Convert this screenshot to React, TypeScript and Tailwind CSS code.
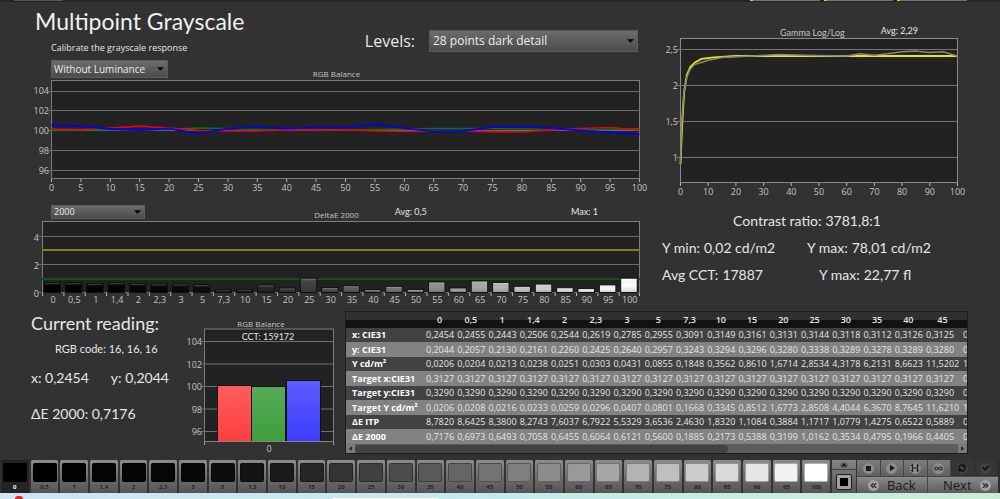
import React from 'react';
import { Check, ChevronsLeft, ChevronsRight, Infinity as InfinityIcon, RefreshCw } from 'lucide-react';

type Point = [number, number];

const levels = [
  '0', '0,5', '1', '1,4', '2', '2,3', '3', '5', '7,3', '10', '15', '20', '25', '30',
  '35', '40', '45', '50', '55', '60', '65', '70', '75', '80', '85', '90', '95', '100'
];

const deltaE = [
  0.72, 0.7, 0.65, 0.71, 0.65, 0.61, 0.61, 0.56, 0.19, 0.22, 0.54, 0.32, 1.02, 0.35,
  0.48, 0.2, 0.44, 0.22, 0.75, 0.32, 0.82, 0.72, 0.44, 0.6, 0.34, 0.28, 0.54, 1.02
];

const rows = [
  { label: 'x: CIE31', values: ['0,2454', '0,2455', '0,2443', '0,2506', '0,2544', '0,2619', '0,2785', '0,2955', '0,3091', '0,3149', '0,3161', '0,3131', '0,3144', '0,3118', '0,3112', '0,3126', '0,3125', '0,3121'] },
  { label: 'y: CIE31', values: ['0,2044', '0,2057', '0,2130', '0,2161', '0,2260', '0,2425', '0,2640', '0,2957', '0,3243', '0,3294', '0,3296', '0,3280', '0,3338', '0,3289', '0,3278', '0,3289', '0,3280', '0,3284'] },
  { label: 'Y cd/m²', values: ['0,0206', '0,0204', '0,0213', '0,0238', '0,0251', '0,0303', '0,0431', '0,0855', '0,1848', '0,3562', '0,8610', '1,6714', '2,8534', '4,3178', '6,2131', '8,6623', '11,5202', '14,8230'] },
  { label: 'Target x:CIE31', values: Array(18).fill('0,3127') },
  { label: 'Target y:CIE31', values: Array(18).fill('0,3290') },
  { label: 'Target Y cd/m²', values: ['0,0206', '0,0208', '0,0216', '0,0233', '0,0259', '0,0296', '0,0407', '0,0801', '0,1668', '0,3345', '0,8512', '1,6773', '2,8508', '4,4044', '6,3670', '8,7645', '11,6210', '14,9110'] },
  { label: 'ΔE ITP', values: ['8,7820', '8,6425', '8,3800', '8,2743', '7,6037', '6,7922', '5,5329', '3,6536', '2,4630', '1,8320', '1,1084', '0,3884', '1,1717', '1,0779', '1,4275', '0,6522', '0,5889', '0,6012'] },
  { label: 'ΔE 2000', values: ['0,7176', '0,6973', '0,6493', '0,7058', '0,6455', '0,6064', '0,6121', '0,5600', '0,1885', '0,2173', '0,5388', '0,3199', '1,0162', '0,3534', '0,4795', '0,1966', '0,4405', '0,2204'] }
];

// One value for every 5 % of signal level
const red = [100.1, 100.05, 100.2, 100.4, 100.2, 99.95, 99.9, 99.9, 100, 100.05, 100, 99.9, 99.85, 99.9, 99.9, 99.83, 99.8, 100, 100.15, 100.25, 100];
const green = [100, 100, 100.05, 100, 100.05, 100.2, 100.15, 100.05, 100.05, 100, 100, 100.05, 100.1, 100.15, 100.15, 100.15, 100.1, 100.1, 100.05, 100.05, 100.15];
const blue = [100.5, 100.4, 100.1, 100, 100.15, 99.65, 100.15, 100.3, 100.15, 100.25, 100.25, 100.57, 100.2, 99.85, 99.9, 100.3, 100.35, 100.2, 99.95, 99.75, 99.55];

const gammaTarget: Point[] = [[0, 0.91], [0.6, 1.45], [1.3, 1.9], [2.3, 2.15], [3.6, 2.26], [5.2, 2.32], [7.6, 2.37], [12, 2.39], [20, 2.41], [100, 2.41]];
const gammaMeasured: Point[] = [[0, 0.91], [0.4, 1.45], [1.2, 1.9], [2.3, 2.12], [3.4, 2.22], [5, 2.29], [7.5, 2.32], [10, 2.35], [15, 2.39], [20, 2.4], [26, 2.41], [35, 2.43], [45, 2.42], [60, 2.41], [65, 2.44], [70, 2.42], [75, 2.44], [80, 2.47], [85, 2.48], [90, 2.46], [95, 2.47], [100, 2.41]];

const toPoints = (points: Point[]) => points.map((p) => p.join(',')).join(' ');

const balancePoints = (values: number[]) =>
  toPoints(values.map((v, i) => [51.5 + i * 29.4, 130 - (v - 100) * 9.8]));

const gammaPoints = (values: Point[]) =>
  toPoints(values.map(([x, y]) => [680.5 + x * 2.765, 229.5 - y * 72]));

const axisText = 'fill-[#c4c4c4] font-["Open_Sans",sans-serif] text-[9px]';

const BalanceChart = () => (
  <svg viewBox="0 78 650 122" className="block w-full" role="img" aria-label="RGB Balance">
    <rect x="51.5" y="80.5" width="588" height="98" fill="#222" stroke="#7c7c7c" />
    {[104, 102, 100, 98, 96].map((v, i) => (
      <g key={v}>
        <line x1="48" x2="640" y1={[91.5, 110.5, 130.5, 150.5, 170.5][i]} y2={[91.5, 110.5, 130.5, 150.5, 170.5][i]} stroke="#6c6c6c" />
        <text x="49" y={94 + i * 20} textAnchor="end" className={axisText}>{v}</text>
      </g>
    ))}
    {red.map((_, i) => (
      <g key={i}>
        <line x1={51.5 + i * 29.4} x2={51.5 + i * 29.4} y1="179" y2="182" stroke="#b4b4b4" />
        <text x={51.5 + i * 29.4} y="191" textAnchor="middle" className={axisText}>{i * 5}</text>
      </g>
    ))}
    <polyline points={balancePoints(green)} fill="none" stroke="#007c00" strokeWidth="1.6" />
    <polyline points={balancePoints(red)} fill="none" stroke="#f00000" strokeWidth="1.6" />
    <polyline points={balancePoints(blue)} fill="none" stroke="#0000f4" strokeWidth="1.8" />
  </svg>
);

const DeltaChart = () => (
  <svg viewBox="0 220 650 86" className="block w-full" role="img" aria-label="DeltaE 2000">
    <defs>
      <linearGradient id="shade" x1="0" y1="0" x2="0" y2="1">
        <stop offset="0" stopColor="#fff" stopOpacity="0.12" />
        <stop offset="0.5" stopColor="#000" stopOpacity="0" />
        <stop offset="1" stopColor="#000" stopOpacity="0.15" />
      </linearGradient>
    </defs>
    <rect x="42.5" y="221.5" width="597" height="71" fill="#222" stroke="#7c7c7c" />
    {[236.5, 264.5, 292.5].map((y, i) => (
      <g key={y}>
        <line x1="38" x2="640" y1={y} y2={y} stroke="#6c6c6c" />
        <text x="39" y={y + 4} textAnchor="end" className={axisText}>{4 - i * 2}</text>
      </g>
    ))}
    <line x1="42" x2="640" y1="250" y2="250" stroke="#857f12" strokeWidth="2" />
    <line x1="42" x2="640" y1="279" y2="279" stroke="#0f5218" strokeWidth="2" />
    {levels.map((level, i) => {
      const x = 44 + i * 21.36;
      const height = deltaE[i] * 14;
      const gray = Math.min(255, Math.round(parseFloat(level.replace(',', '.')) * 2.6));
      return (
        <g key={level}>
          <rect x={x} y={292.5 - height} width="16.5" height={height} fill={`rgb(${gray},${gray},${gray})`} stroke="#101010" />
          <rect x={x + 0.5} y={293 - height} width="15.5" height={height - 1} fill="url(#shade)" />
          <line x1={x + 1} x2={x + 15.5} y1={293.5 - height} y2={293.5 - height} stroke="#fff" strokeOpacity="0.16" />
          <line x1={42.5 + i * 21.36} x2={42.5 + i * 21.36} y1="293" y2="296" stroke="#b4b4b4" />
          <text x={x + 9} y="303" textAnchor="middle" className={axisText}>{level}</text>
        </g>
      );
    })}
    <line x1="639.5" x2="639.5" y1="293" y2="296" stroke="#b4b4b4" />
  </svg>
);

const GammaChart = () => (
  <svg viewBox="650 37 350 163" className="block w-full" role="img" aria-label="Gamma Log/Log">
    <rect x="680.5" y="38.5" width="277" height="144" fill="#222" stroke="#8a8a8a" />
    {['2,5', '2', '1,5', '1'].map((v, i) => (
      <g key={v}>
        <line x1="677" x2="957" y1={49.5 + i * 36} y2={49.5 + i * 36} stroke="#747474" />
        <text x="678" y={53 + i * 36} textAnchor="end" className={axisText}>{v}</text>
      </g>
    ))}
    {[0, 10, 20, 30, 40, 50, 60, 70, 80, 90, 100].map((v) => (
      <g key={v}>
        <line x1={680.5 + v * 2.77} x2={680.5 + v * 2.77} y1="183" y2="186" stroke="#b4b4b4" />
        <text x={680.5 + v * 2.77} y="195" textAnchor="middle" className={axisText}>{v}</text>
      </g>
    ))}
    <polyline points={gammaPoints(gammaTarget)} fill="none" stroke="#e8e800" strokeWidth="1.8" />
    <polyline points={gammaPoints(gammaMeasured)} fill="none" stroke="#858585" strokeWidth="1.5" />
  </svg>
);

const ReadingChart = () => (
  <svg viewBox="185 328 160 129" className="block w-full" role="img" aria-label="RGB Balance of the current reading">
    <defs>
      <linearGradient id="barRed" x1="0" y1="0" x2="0" y2="1">
        <stop offset="0" stopColor="#ff5c5c" />
        <stop offset="1" stopColor="#ff3e3e" />
      </linearGradient>
      <linearGradient id="barGreen" x1="0" y1="0" x2="0" y2="1">
        <stop offset="0" stopColor="#58aa58" />
        <stop offset="1" stopColor="#3c9f3c" />
      </linearGradient>
      <linearGradient id="barBlue" x1="0" y1="0" x2="0" y2="1">
        <stop offset="0" stopColor="#5c5cff" />
        <stop offset="1" stopColor="#3c3cff" />
      </linearGradient>
    </defs>
    <rect x="204.5" y="329" width="129" height="112.5" fill="#222" stroke="#7c7c7c" />
    {[104, 102, 100, 98, 96].map((v, i) => (
      <g key={v}>
        <line x1="201" x2="333" y1={341.5 + i * 22.5} y2={341.5 + i * 22.5} stroke="#707070" />
        <text x="202" y={345 + i * 22.5} textAnchor="end" className={axisText}>{v}</text>
      </g>
    ))}
    <rect x="217.5" y="385.5" width="34" height="56" fill="url(#barRed)" stroke="#111" />
    <rect x="251.5" y="386.5" width="34" height="55" fill="url(#barGreen)" stroke="#111" />
    <rect x="286.5" y="380.5" width="34" height="61" fill="url(#barBlue)" stroke="#111" />
    <line x1="204" x2="334" y1="441.5" y2="441.5" stroke="#858585" />
    <line x1="204.5" x2="204.5" y1="442" y2="445" stroke="#999" />
    <line x1="333.5" x2="333.5" y1="442" y2="445" stroke="#999" />
    <text x="268" y="340" textAnchor="middle" className='fill-[#e4e4e4] font-["Lato",sans-serif] text-[9px]'>CCT: 159172</text>
    <text x="269" y="452" textAnchor="middle" className={axisText}>0</text>
  </svg>
);

type DropdownProps = { label: string; value: string; className: string };

const Dropdown = ({ label, value, className }: DropdownProps) => (
  <div className="relative">
    <select
      aria-label={label}
      className={`block w-full appearance-none border border-[#5c5c5c] bg-linear-to-b from-[#6c6c6c] to-[#4b4b4b] text-[#ececec] ${className}`}
    >
      <option>{value}</option>
    </select>
    <svg viewBox="0 0 8 4" className="pointer-events-none absolute top-1/2 right-1 h-1 w-[7px] -translate-y-1/2">
      <path d="M0 0h8L4 4z" fill="#050505" />
    </svg>
  </div>
);

const toolButtons = [
  { name: 'Stop', icon: <span className="size-[5px] bg-[#181818]" />, off: false },
  { name: 'Play', icon: <svg viewBox="0 0 6 6" className="size-[6px]"><path d="M1 0l5 3-5 3z" fill="#181818" /></svg>, off: false },
  { name: 'Read series', icon: <svg viewBox="0 0 8 8" className="size-2"><path d="M1.5 0v8M6.5 0v8M1.5 4h5M0 1.500h2M6 1.500h2M0 6.500h2M6 6.500h2" stroke="#222" strokeWidth="1.200" /></svg>, off: false },
  { name: 'Read continuously', icon: <InfinityIcon size={9} strokeWidth={3} />, off: false },
  { name: 'Refresh', icon: <RefreshCw size={8} strokeWidth={4} />, off: true },
  { name: 'Apply', icon: <Check size={8} strokeWidth={5} />, off: true }
];

const App: React.FC = () => {
  return (
    <div className='flex min-h-screen flex-col overflow-hidden bg-[#323232] font-["Open_Sans",sans-serif] text-[#e6e6e6]'>
      {/* Lower edge of the charts above */}
      <div className="grid h-[2px] grid-cols-[14fr_49fr_687fr_217fr_33fr] bg-[#242424]">
        <span />
        <span className="h-px bg-[#555]" />
        <span />
        <span className="grid h-px grid-cols-3 gap-1">
          {[0, 1, 2].map((i) => (
            <span key={i} className="border-l-3 border-[#d6d600] bg-[#747474]" />
          ))}
        </span>
      </div>

      <main className="grid grid-cols-[650fr_350fr]">
        <section>
          <div className="flex h-[58px] items-start justify-between pr-3 pl-[35px]">
            <div>
              <h1 className='pt-[3px] font-["Lato",sans-serif] text-[23px] leading-8 text-[#f0f0f0]'>Multipoint Grayscale</h1>
              <p className="pt-px pl-4 text-[9px] leading-5 whitespace-nowrap">Calibrate the grayscale response</p>
            </div>
            <div className="flex items-center gap-[14px] pt-[27px]">
              <span className="text-[16px] leading-6">Levels:</span>
              <div className="w-[209px]">
                <Dropdown label="Levels" value="28 points dark detail" className="h-[22px] px-[3px] text-[12px]" />
              </div>
            </div>
          </div>
          <div className="grid grid-cols-[1fr_auto_1fr] items-end pr-7 pl-[51px]">
            <div className="w-[117px]">
              <Dropdown label="Luminance" value="Without Luminance" className="h-[18px] px-[2px] text-[10px]" />
            </div>
            <h2 className="text-[8px] leading-2 text-[#c4c4c4]">RGB Balance</h2>
          </div>
          <BalanceChart />

          <div className="grid grid-cols-[1fr_auto_1fr] items-end pt-[5px] pr-7 pb-px pl-[51px]">
            <div className="w-[94px]">
              <Dropdown label="DeltaE formula" value="2000" className="h-[14px] px-[2px] text-[9px] leading-3" />
            </div>
            <h2 className="text-[8px] leading-2 text-[#c4c4c4]">DeltaE 2000</h2>
            <div className='flex justify-between pr-6 pb-px pl-9 font-["Lato",sans-serif] text-[9px] leading-3'>
              <span>Avg: 0,5</span>
              <span>Max: 1</span>
            </div>
          </div>
          <DeltaChart />
        </section>

        <section>
          <div className='flex h-[35px] items-end justify-center gap-9 pl-12 font-["Lato",sans-serif] text-[9px] leading-2'>
            <h2 className="text-[#c4c4c4]">Gamma Log/Log</h2>
            <span className="pb-[2px]">Avg: 2,29</span>
          </div>
          <GammaChart />
          <dl className='grid grid-cols-[145fr_193fr] gap-y-[3px] pt-[9px] pl-3 font-["Lato",sans-serif] text-[14px] leading-6'>
            <div className="col-span-2 flex justify-center gap-1 pr-12">
              <dt>Contrast ratio:</dt>
              <dd>3781,8:1</dd>
            </div>
            <div className="flex gap-1">
              <dt>Y min:</dt>
              <dd>0,02 cd/m2</dd>
            </div>
            <div className="flex gap-1">
              <dt>Y max:</dt>
              <dd>78,01 cd/m2</dd>
            </div>
            <div className="flex gap-1">
              <dt>Avg CCT:</dt>
              <dd>17887</dd>
            </div>
            <div className="flex gap-1 pl-3">
              <dt>Y max:</dt>
              <dd>22,77 fl</dd>
            </div>
          </dl>
        </section>
      </main>

      <div className="grid grid-cols-[185fr_160fr_655fr] pt-[5px] pb-[3px]">
        <section className='pl-[31px] font-["Lato",sans-serif] text-[14px] leading-6 whitespace-nowrap'>
          <h2 className="text-[18px] leading-6">Current reading:</h2>
          <p className="py-[2px] pl-6 text-[11px]">RGB code: 16, 16, 16</p>
          <p className="flex gap-[22px] pt-[3px]">
            <span>x: 0,2454</span>
            <span>y: 0,2044</span>
          </p>
          <p className="pt-3">ΔE 2000: 0,7176</p>
        </section>

        <section>
          <h2 className="pt-[9px] pr-2 text-center text-[8px] leading-2 text-[#c4c4c4]">RGB Balance</h2>
          <ReadingChart />
        </section>

        <section className="mr-8 h-[143px] min-w-0 overflow-hidden border border-[#1c1c1c]">
          <table className="w-[646px] table-fixed border-collapse text-[9px] leading-3 whitespace-nowrap">
            <colgroup>
              <col className="w-[78px]" />
              {levels.slice(0, 16).map((level) => (
                <col key={level} />
              ))}
              <col className="w-[37px]" />
              <col className="w-[31px]" />
            </colgroup>
            <thead>
              <tr className="h-4 bg-linear-to-b from-[#303030] from-50% to-[#121212] to-50%">
                <th className="p-0" aria-label="Measure" />
                {levels.slice(0, 18).map((level, i) => (
                  <th key={level} scope="col" className="p-0 font-semibold">{i < 17 && level}</th>
                ))}
              </tr>
            </thead>
            <tbody>
              {rows.map((row) => (
                <tr key={row.label} className="h-[14px] bg-[#424242] even:h-[15px] even:bg-[#828282]">
                  <th scope="row" className="p-0 pl-[6px] text-left font-bold text-white">{row.label}</th>
                  {row.values.map((value: string, i: number) => (
                    <td key={i} className="p-0 pl-[2px]">{value}</td>
                  ))}
                </tr>
              ))}
            </tbody>
          </table>
          {/* Horizontal scroll bar */}
          <div className="flex h-[9px] items-center bg-[#5c5c5c]">
            <button aria-label="Scroll left" className="flex size-[9px] items-center justify-center bg-[#7a7a7a]">
              <svg viewBox="0 0 4 6" className="h-[5px] w-[3px]"><path d="M4 0v6L0 3z" fill="#222" /></svg>
            </button>
            <span className="h-2 w-3/5 rounded-full bg-[#434343]" />
            <button aria-label="Scroll right" className="ml-auto flex size-[9px] items-center justify-center bg-[#7a7a7a]">
              <svg viewBox="0 0 4 6" className="h-[5px] w-[3px]"><path d="M0 0v6l4-3z" fill="#222" /></svg>
            </button>
          </div>
        </section>
      </div>

      <footer className="grid h-[33px] grid-cols-[831fr_26fr_143fr] bg-[#2c2c2c]">
        <div className="grid grid-cols-28">
          {levels.map((level, i) => {
            const gray = Math.round(parseFloat(level.replace(',', '.')) * 2.55);
            return (
              <button
                key={level}
                className={`flex min-w-0 flex-col items-center rounded-t-xs border-x border-[#333] pt-[3px] text-[6px] leading-[9px] font-bold ${
                  i === 0 ? 'bg-[#242424] text-white' : 'bg-linear-to-b from-[#8c8c8c] to-[#545454] text-[#242424]'
                }`}
              >
                <span
                  className="h-[19px] w-6 rounded-xs border border-black/30"
                  style={{ backgroundColor: `rgb(${gray},${gray},${gray})` }}
                />
                <span className="pt-px">{level.replace(',', '.')}</span>
              </button>
            );
          })}
        </div>

        <div className="flex flex-col border-x border-[#333] bg-linear-to-b from-[#858585] to-[#545454]">
          <button aria-label="Expand" className="flex h-[10px] items-center justify-center border-b border-[#444]">
            <svg viewBox="0 0 8 6" className="h-[6px] w-2"><ellipse cx="4" cy="3" rx="4" ry="3" fill="#666" /><path d="M1 4.500L4 1l3 3.500z" fill="#1c1c1c" /></svg>
          </button>
          <button aria-label="Full window" className="flex flex-1 items-center justify-center">
            <span className="flex size-4 items-center justify-center rounded-xs border border-[#1c1c1c] bg-[#a0a0a0]">
              <span className="size-2 bg-black" />
            </span>
          </button>
        </div>

        <div className="flex flex-col pr-[2px]">
          <div className="grid h-4 grid-cols-6">
            {toolButtons.map((tool) => (
              <button
                key={tool.name}
                aria-label={tool.name}
                className={`flex items-center justify-center border-r ${
                  tool.off ? 'border-[#2c2c2c] bg-[#363636]' : 'border-[#444] bg-linear-to-b from-[#7c7c7c] to-[#606060]'
                }`}
              >
                <span className={`flex size-[11px] items-center justify-center rounded-full ${tool.off ? 'bg-[#424242] text-[#111]' : 'bg-[#8c8c8c] text-[#222]'}`}>
                  {tool.icon}
                </span>
              </button>
            ))}
          </div>
          <div className="grid h-[17px] grid-cols-2 border-t border-[#444] text-[13px] leading-4 text-[#1a1a1a]">
            <button className="flex items-center justify-center gap-2 border-r border-[#444] bg-linear-to-b from-[#8a8a8a] to-[#5c5c5c]">
              <span className="flex size-[11px] items-center justify-center rounded-full bg-[#a0a0a0]"><ChevronsLeft size={9} strokeWidth={3} /></span>
              Back
            </button>
            <button className="flex items-center justify-center gap-2 bg-linear-to-b from-[#8a8a8a] to-[#5c5c5c] pl-2">
              Next
              <span className="flex size-[11px] items-center justify-center rounded-full bg-[#a0a0a0]"><ChevronsRight size={9} strokeWidth={3} /></span>
            </button>
          </div>
        </div>
      </footer>

      {/* Sliver of the desktop below the window */}
      <div className="grid min-h-[6px] flex-1 grid-cols-[15fr_8fr_310fr_105fr_562fr] items-end bg-linear-to-r from-[#d0e4f2] via-[#c4ebec] to-[#cbecd4]">
        <span />
        <span className="h-[3px] rounded-t-full bg-[#d83030]" />
        <span />
        <span className="h-px bg-white" />
      </div>
    </div>
  );
};

export default App;
